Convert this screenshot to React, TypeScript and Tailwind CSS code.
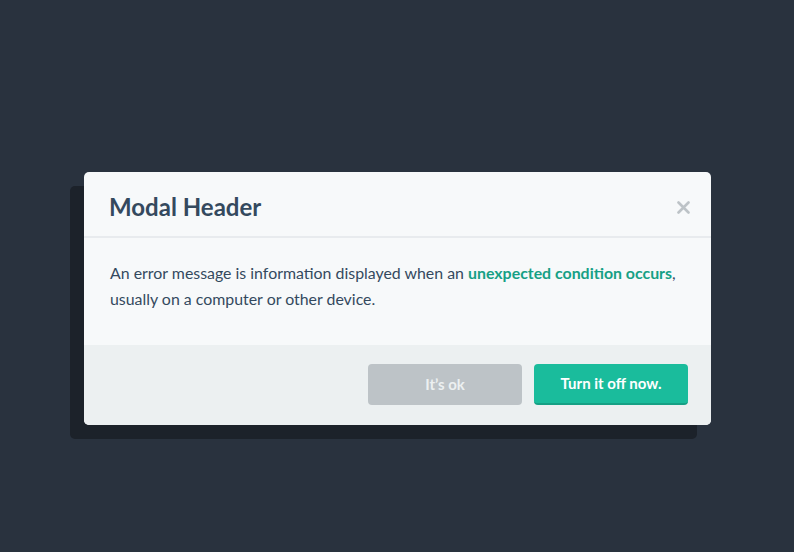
export default function App() {
  return (
    <div
      className="min-h-[552px] w-full bg-[#29323e] pt-[172px]"
      style={{ fontFamily: "Lato, 'Open Sans', sans-serif" }}
    >
      <div className="ml-[84px] w-[627px] overflow-hidden rounded-[5px] bg-[#f7f9fa] shadow-[-14px_14px_0_#1c222a]">
        <div className="flex h-[66px] items-center justify-between border-b-2 border-[#e8ebee] pl-[25px] pr-[16px] pt-[6px]">
          <h2 className="text-[24px] font-bold text-[#34495e]">Modal Header</h2>
          <button className="flex h-6 w-6 items-center justify-center text-[#bdc3c7]">
            <svg width="13" height="13" viewBox="0 0 13 13">
              <path d="M1.5 1.5 11.5 11.5M11.5 1.5 1.5 11.5" stroke="currentColor" strokeWidth="2.6" strokeLinecap="round" />
            </svg>
          </button>
        </div>
        <div className="px-[26px] pb-[33px] pt-[22px] text-[15.9px] leading-[26px] text-[#34495e]">
          An error message is information displayed when an{" "}
          <a className="font-bold text-[#16a085]">unexpected condition occurs</a>,
          usually on a computer or other device.
        </div>
        <div className="flex justify-end gap-3 bg-[#ecf0f1] pb-[20px] pr-[23px] pt-[19px]">
          <button className="h-[41px] w-[154px] rounded-[4px] bg-[#bdc3c7] text-[15px] font-bold text-[#ecf0f1]">
            It’s ok
          </button>
          <button className="h-[41px] w-[154px] rounded-[4px] border-b-2 border-[#16a085] bg-[#1abc9c] text-[15px] font-bold text-white">
            Turn it off now.
          </button>
        </div>
      </div>
    </div>
  );
}
